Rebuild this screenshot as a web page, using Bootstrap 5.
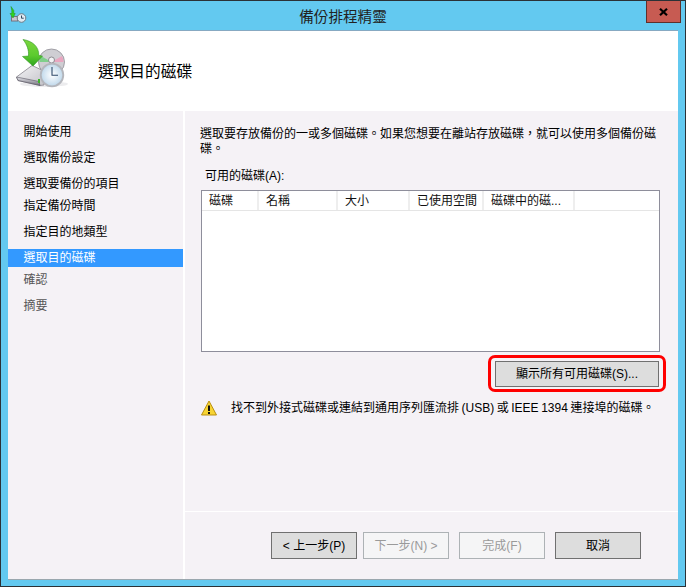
<!DOCTYPE html>
<html lang="zh-Hant">
<head>
<meta charset="utf-8">
<title>備份排程精靈</title>
<link href="https://cdn.jsdelivr.net/npm/bootstrap@5.3.0/dist/css/bootstrap.min.css" rel="stylesheet">
<style>
html,body{margin:0;background:#63c9f0}
body{font:12px/15px "Liberation Sans","Noto Sans CJK TC",sans-serif;color:#000}
.wiz-window{width:686px;height:587px;border:1px solid #2b3136;background:#63c9f0;padding:0 7px 6px}
.wiz-title{height:29px;position:relative;margin:0 -7px}
.wiz-title-text{font-size:14.6px;line-height:29px;padding-top:2px;color:#222}
.wiz-appicon{position:absolute;left:8px;top:5px;width:18px;height:18px}
.wiz-close{position:absolute;left:645px;top:-1px;width:35px;height:23px;background:#c75b52;border:1px solid #5f302b;border-top-color:#2b3136}
.wiz-client{height:550px;border-top:1px solid #87a9c2;border-bottom:1px solid #9aa7ae;background:#fff}
.wiz-head{height:80px;background:#fff}
.wiz-bigicon{width:60px;height:60px;margin:5px 0 0 4px;flex:none;align-self:flex-start}
.wiz-h1{font-size:15.7px;line-height:20px;margin:2px 0 0 26px;font-weight:400;color:#000}
.wiz-body{height:468px;gap:2px;background:#fff}
.wiz-side{width:175px;background:#f5f2f6;padding-top:12px}
.wiz-step{height:18px;line-height:18px;padding-left:15.5px}
.wiz-step-on{background:#3399ff;color:#fff}
.wiz-step-off{color:#555}
.wiz-pane{width:493px;background:#f5f2f6}
.wiz-upper{height:400px;padding:16px 12px 0 15px;border-bottom:0}
.wiz-sep{height:1px;background:#fff}
.wiz-desc{margin:0;width:460px}
.wiz-label{margin:12px 0 0 5px}
.wiz-list{width:459px;height:162px;margin:6px 0 0 1px;background:#fff;border:1px solid #8e8e9b}
.wiz-cols{height:20px;border-bottom:1px solid #e5e5e5}
.wiz-col{height:19px;line-height:21px;padding:0 0 0 7px;border-right:2px solid #eeeeee;white-space:nowrap;color:#111}
.wc1{width:57px}.wc2{width:79px}.wc3{width:72px}.wc4{width:74px}.wc5{width:91px}
.wiz-ring{margin-top:3px;border:3px solid #f00;border-radius:7px;padding:3px 4px 2px}
.wiz-warn{margin-top:8px;height:16px;margin-left:1px;word-spacing:-.8px}
.wiz-warn svg{width:16px;height:16px;flex:none;margin-right:14px}
.wiz-foot{padding:20px 37px 0 0;gap:10px}
.wiz-btn{--bs-btn-padding-x:0;--bs-btn-padding-y:0;--bs-btn-font-size:12px;--bs-btn-border-radius:0;--bs-btn-line-height:15px;background:#dddddd;border:1px solid #707070;color:#000;height:27px;width:86px;border-radius:0;font-size:12px;padding-top:2px;white-space:nowrap}
.wiz-btn:disabled{background:#f5f5f6;border-color:#adb2b5;color:#9a9a9a;opacity:1}
.wiz-btn.wiz-show{width:164px;height:26px;padding-top:1px}
.wiz-prev{margin-right:-4px}
</style>
</head>
<body>
<div class="wiz-window d-flex flex-column">
  <div class="wiz-title d-flex justify-content-center">
    <svg class="wiz-appicon" viewBox="9 6 18 18">
      <rect x="11.5" y="16.5" width="6" height="4.500" fill="#c9c6d0" stroke="#77737f"/>
      <path d="M11 6.500 13.800 10.500V13.500H15.200L13 18 10 13.500H11.800V10.500z" fill="#2fd61e" stroke="#1f8f1b" stroke-width=".5"/>
      <circle cx="21.500" cy="18" r="4.300" fill="#dfeaf2" stroke="#6f7b85"/>
      <path d="M21.500 15.500v2.700h2.200" fill="none" stroke="#33475c"/>
    </svg>
    <span class="wiz-title-text">備份排程精靈</span>
    <div class="wiz-close d-flex align-items-center justify-content-center">
      <svg width="9" height="8" viewBox="0 0 9 8"><path d="M1 .8 8 7.200M8 .8 1 7.200" stroke="#000" stroke-width="2.200" fill="none"/></svg>
    </div>
  </div>
  <div class="wiz-client">
    <div class="wiz-head d-flex align-items-center">
      <svg class="wiz-bigicon" viewBox="12 36 60 60">
        <defs>
          <linearGradient id="gD" x1="0" y1="0" x2="0" y2="1"><stop offset="0" stop-color="#e8e8ee"/><stop offset="1" stop-color="#6f6d78"/></linearGradient>
          <linearGradient id="gT" x1="0" y1="0" x2="1" y2="1"><stop offset="0" stop-color="#f4f4f6"/><stop offset="1" stop-color="#c3c2c8"/></linearGradient>
          <linearGradient id="gA" x1="0" y1="0" x2="0" y2="1"><stop offset="0" stop-color="#7cd640"/><stop offset=".6" stop-color="#5ccb2e"/><stop offset="1" stop-color="#2fa51f"/></linearGradient>
          <radialGradient id="gC" cx=".5" cy=".5" r=".6"><stop offset="0" stop-color="#ffffff"/><stop offset=".7" stop-color="#c9deee"/><stop offset="1" stop-color="#9fbdd4"/></radialGradient>
        </defs>
        <ellipse cx="44" cy="84" rx="24" ry="3" fill="#ececee"/>
        <circle cx="51.500" cy="62" r="13" fill="#cfced3" stroke="#8f8e95" stroke-width=".8"/>
        <path d="M51.500 62 41 56A12.500 12.500 0 0 0 39.500 62z" fill="#7fcf8a"/>
        <path d="M51.500 62 62 56A12.500 12.500 0 0 1 63.500 62z" fill="#e9a6c0"/>
        <circle cx="51.500" cy="60" r="3" fill="#f2f2f4" stroke="#77767c" stroke-width=".8"/>
        <path d="M16.500 77 32 65.500 44 71 44 85 40 85.500 18 80.500z" fill="url(#gT)" stroke="#85838c" stroke-width=".8"/>
        <path d="M16.500 77 39 81.500 40 85.500 18 80.500z" fill="url(#gD)" stroke="#55535e" stroke-width=".6"/>
        <rect x="38" y="79" width="2" height="4" fill="#3fb52c"/>
        <circle cx="52" cy="75" r="11.300" fill="url(#gC)" stroke="#b4b6bc" stroke-width="1.800"/>
        <path d="M52 67v8.300h6" fill="none" stroke="#2f4a6a" stroke-width="1.100"/>
        <path d="M23 39.500C32 41 39 46 38.800 55.500L42.500 56 33 66 22.500 56.500 28.500 56C29 50 27 44.500 23 39.500z" fill="url(#gA)" stroke="#2f9422" stroke-width=".6"/>
      </svg>
      <h1 class="wiz-h1">選取目的磁碟</h1>
    </div>
    <div class="wiz-body d-flex">
      <div class="wiz-side">
        <div class="wiz-step">開始使用</div>
        <div class="wiz-step mt-2">選取備份設定</div>
        <div class="wiz-step mt-2">選取要備份的項目</div>
        <div class="wiz-step mt-1">指定備份時間</div>
        <div class="wiz-step mt-2">指定目的地類型</div>
        <div class="wiz-step mt-2 wiz-step-on">選取目的磁碟</div>
        <div class="wiz-step mt-1 wiz-step-off">確認</div>
        <div class="wiz-step mt-2 wiz-step-off">摘要</div>
      </div>
      <div class="wiz-pane d-flex flex-column">
        <div class="wiz-upper">
          <p class="wiz-desc">選取要存放備份的一或多個磁碟。如果您想要在離站存放磁碟，就可以使用多個備份磁碟。</p>
          <div class="wiz-label">可用的磁碟(A):</div>
          <div class="wiz-list">
            <div class="wiz-cols d-flex">
              <div class="wiz-col wc1">磁碟</div>
              <div class="wiz-col wc2">名稱</div>
              <div class="wiz-col wc3">大小</div>
              <div class="wiz-col wc4">已使用空間</div>
              <div class="wiz-col wc5">磁碟中的磁...</div>
            </div>
          </div>
          <div class="d-flex justify-content-end">
            <div class="wiz-ring"><button type="button" class="btn wiz-btn wiz-show">顯示所有可用磁碟(S)...</button></div>
          </div>
          <div class="wiz-warn d-flex align-items-center">
            <svg viewBox="0 0 16 16"><path d="M8 1 15.500 15H.5z" fill="#f7d433" stroke="#b98f10" stroke-linejoin="round"/><rect x="7" y="5.500" width="2" height="5.500" fill="#111"/><rect x="7" y="12" width="2" height="2" fill="#111"/></svg>
            <span>找不到外接式磁碟或連結到通用序列匯流排 (USB) 或 IEEE 1394 連接埠的磁碟。</span>
          </div>
        </div>
        <div class="wiz-sep"></div>
        <div class="wiz-foot d-flex justify-content-end">
          <button type="button" class="btn wiz-btn wiz-prev">&lt; 上一步(P)</button>
          <button type="button" class="btn wiz-btn" disabled>下一步(N) &gt;</button>
          <button type="button" class="btn wiz-btn" disabled>完成(F)</button>
          <button type="button" class="btn wiz-btn">取消</button>
        </div>
      </div>
    </div>
  </div>
</div>
<script src="https://cdn.jsdelivr.net/npm/bootstrap@5.3.0/dist/js/bootstrap.bundle.min.js"></script>
</body>
</html>
